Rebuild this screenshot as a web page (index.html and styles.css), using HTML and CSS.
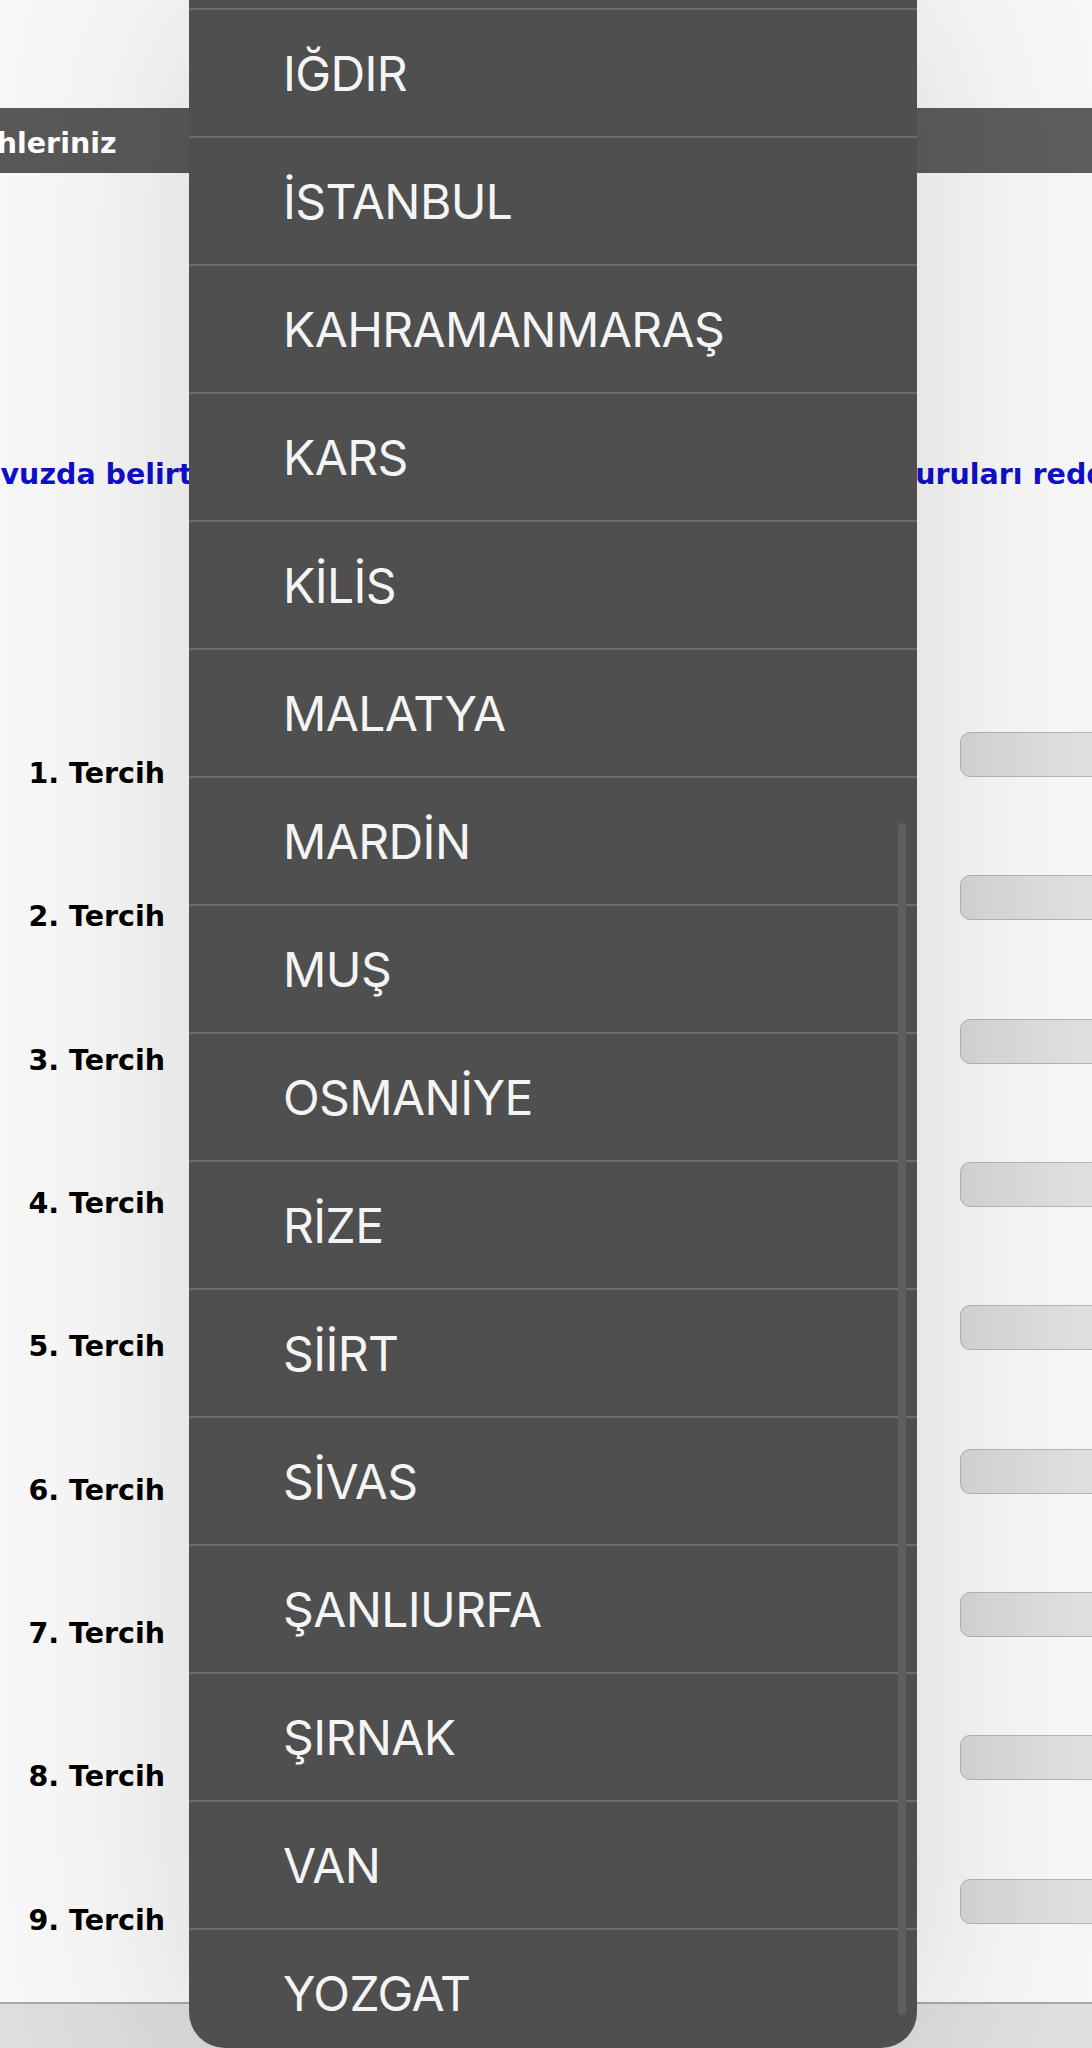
FILE: index.html
```html
<!DOCTYPE html>
<html lang="tr">
<head>
  <meta charset="UTF-8">
  <meta name="viewport" content="width=device-width, initial-scale=1.0">
  <title>Tercihleriniz</title>
  <link rel="stylesheet" href="styles.css">
</head>
<body>
  <div class="page">
    <main class="content">
      <h2 class="bar"><span>Tercihleriniz</span></h2>
      <p class="notice">
        <span class="notice-left">havuzda belirtilen şartlara uymayan adayların</span>
        <span class="notice-right">başvuruları reddedilecektir.</span>
      </p>
      <div class="prefs">
        <div class="pref"><label>1. Tercih</label><select class="pick"></select></div>
        <div class="pref"><label>2. Tercih</label><select class="pick"></select></div>
        <div class="pref"><label>3. Tercih</label><select class="pick"></select></div>
        <div class="pref"><label>4. Tercih</label><select class="pick"></select></div>
        <div class="pref"><label>5. Tercih</label><select class="pick"></select></div>
        <div class="pref"><label>6. Tercih</label><select class="pick"></select></div>
        <div class="pref"><label>7. Tercih</label><select class="pick"></select></div>
        <div class="pref"><label>8. Tercih</label><select class="pick"></select></div>
        <div class="pref"><label>9. Tercih</label><select class="pick"></select></div>
      </div>
    </main>
    <footer class="footer"></footer>

    <!-- native select popover, open over the form -->
    <div class="picker">
      <ul class="picker-list">
        <li>IĞDIR</li>
        <li>İSTANBUL</li>
        <li>KAHRAMANMARAŞ</li>
        <li>KARS</li>
        <li>KİLİS</li>
        <li>MALATYA</li>
        <li>MARDİN</li>
        <li>MUŞ</li>
        <li>OSMANİYE</li>
        <li>RİZE</li>
        <li>SİİRT</li>
        <li>SİVAS</li>
        <li>ŞANLIURFA</li>
        <li>ŞIRNAK</li>
        <li>VAN</li>
        <li>YOZGAT</li>
      </ul>
      <div class="scroll-thumb"></div>
    </div>
  </div>
</body>
</html>
```
FILE: styles.css
```css
body {
  margin: 0;
  padding: 0;
  font-family: "DejaVu Sans", Verdana, sans-serif;
  background-color: #f7f7f7;
}
.page {
  position: relative;
  width: 1092px;
  height: 2048px;
  overflow: hidden;
}
.content {
  height: 2004px;
  box-sizing: border-box;
  padding-top: 108px;
  background-color: #f7f7f7;
  border-bottom: 2px solid #a9a9a9;
  overflow: hidden;
}
.bar {
  margin: 0;
  height: 65px;
  box-sizing: border-box;
  padding-top: 20px;
  background: linear-gradient(to right, #585858, #5d5d5d);
  color: white;
  font-size: 28.5px;
  line-height: 32px;
  font-weight: bold;
  white-space: nowrap;
}
.bar span {
  margin-left: -79px;
}
.notice {
  display: flex;
  margin: 286px 0 0 0;
  color: #1010c8;
  font-size: 28.5px;
  line-height: 32px;
  font-weight: bold;
  white-space: nowrap;
}
.notice-left {
  flex: 0 0 956px;
  margin-left: -39px;
  overflow: hidden;
}
.notice-right {
  margin-left: -77px;
}
.prefs {
  margin-top: 241px;
  display: grid;
  grid-auto-rows: 143.35px;
}
.pref {
  display: grid;
  grid-template-columns: 165px 795px 200px;
  align-items: start;
}
.pref label {
  margin-top: 26px;
  text-align: right;
  font-size: 28.5px;
  line-height: 32px;
  font-weight: bold;
  color: #000;
  white-space: nowrap;
}
.pick {
  grid-column: 3;
  appearance: none;
  width: 200px;
  height: 45px;
  border: 1.5px solid #b5b5b5;
  border-radius: 10px;
  background: linear-gradient(to right, #d8d8d8, #e4e4e4);
}
.footer {
  height: 44px;
  background: linear-gradient(to right, #dedede, #d9d9d9 40%, #e0e0e0);
}
.picker {
  position: absolute;
  top: 0;
  left: 189px;
  width: 728px;
  height: 2048px;
  background-color: #4f4f4f;
  border-radius: 0 0 36px 36px;
  box-shadow: 0 0 200px rgba(0, 0, 0, 0.13);
  overflow: hidden;
}
.picker-list {
  list-style: none;
  margin: 8px 0 0 0;
  padding: 0;
}
.picker-list li {
  display: flex;
  align-items: center;
  height: 128px;
  box-sizing: border-box;
  padding-left: 94px;
  border-top: 2px solid #6c6c6c;
  color: #f4f4f4;
  font-family: Inter, "Noto Sans", sans-serif;
  font-size: 48px;
  letter-spacing: -0.6px;
}
.scroll-thumb {
  position: absolute;
  top: 823px;
  left: 709px;
  width: 8px;
  height: 1192px;
  border-radius: 4px;
  background-color: #5e5e5e;
}
```
